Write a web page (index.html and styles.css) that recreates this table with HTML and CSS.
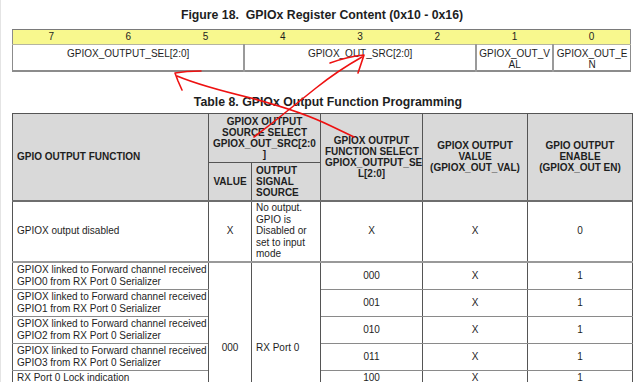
FILE: index.html
```html
<!DOCTYPE html>
<html>
<head>
<meta charset="utf-8">
<link rel="stylesheet" href="styles.css">
</head>
<body>
<div class="page">
  <h2 class="fig-title">Figure 18.&nbsp; GPIOx Register Content (0x10 - 0x16)</h2>
  <table class="reg">
    <colgroup>
      <col class="rc"><col class="rc"><col class="rc"><col class="rc"><col class="rc"><col class="rc"><col class="rc"><col class="rc">
    </colgroup>
    <tr class="bits">
      <td>7</td><td>6</td><td>5</td><td>4</td><td>3</td><td>2</td><td>1</td><td>0</td>
    </tr>
    <tr class="fields">
      <td colspan="3">GPIOX_OUTPUT_SEL[2:0]</td>
      <td colspan="3">GPIOX_OUT_SRC[2:0]</td>
      <td>GPIOX_OUT_V<br>AL</td>
      <td>GPIOX_OUT_E<br>N</td>
    </tr>
  </table>

  <h2 class="tbl-title">Table 8. GPIOx Output Function Programming</h2>

  <table class="func">
    <colgroup>
      <col class="c1"><col class="c2"><col class="c3"><col class="c4"><col class="c5"><col class="c6">
    </colgroup>
    <thead>
      <tr class="h1">
        <th rowspan="2" class="left">GPIO OUTPUT FUNCTION</th>
        <th colspan="2">GPIOX OUTPUT<br>SOURCE SELECT<br>GPIOX_OUT_SRC[2:0<br>]</th>
        <th rowspan="2">GPIOX OUTPUT<br>FUNCTION SELECT<br>GPIOX_OUTPUT_SE<br>L[2:0]</th>
        <th rowspan="2">GPIOX OUTPUT<br>VALUE<br>(GPIOX_OUT_VAL)</th>
        <th rowspan="2">GPIO OUTPUT<br>ENABLE<br>(GPIOX_OUT EN)</th>
      </tr>
      <tr class="h2">
        <th>VALUE</th>
        <th class="left">OUTPUT<br>SIGNAL<br>SOURCE</th>
      </tr>
    </thead>
    <tbody>
      <tr class="r-dis">
        <td class="left">GPIOX output disabled</td>
        <td>X</td>
        <td class="left">No output.<br>GPIO is<br>Disabled or<br>set to input<br>mode</td>
        <td>X</td>
        <td>X</td>
        <td>0</td>
      </tr>
      <tr class="r2">
        <td class="left">GPIOX linked to Forward channel received<br>GPIO0 from RX Port 0 Serializer</td>
        <td rowspan="8">000</td>
        <td rowspan="8" class="left">RX Port 0</td>
        <td>000</td><td>X</td><td>1</td>
      </tr>
      <tr class="r2">
        <td class="left">GPIOX linked to Forward channel received<br>GPIO1 from RX Port 0 Serializer</td>
        <td>001</td><td>X</td><td>1</td>
      </tr>
      <tr class="r2">
        <td class="left">GPIOX linked to Forward channel received<br>GPIO2 from RX Port 0 Serializer</td>
        <td>010</td><td>X</td><td>1</td>
      </tr>
      <tr class="r2">
        <td class="left">GPIOX linked to Forward channel received<br>GPIO3 from RX Port 0 Serializer</td>
        <td>011</td><td>X</td><td>1</td>
      </tr>
      <tr class="r1">
        <td class="left">RX Port 0 Lock indication</td>
        <td>100</td><td>X</td><td>1</td>
      </tr>
      <tr class="r1">
        <td class="left">RX Port 0 Pass indication</td>
        <td>101</td><td>X</td><td>1</td>
      </tr>
      <tr class="r1">
        <td class="left">RX Port 0 Frame Valid indication</td>
        <td>110</td><td>X</td><td>1</td>
      </tr>
      <tr class="r1">
        <td class="left">RX Port 0 Line Valid indication</td>
        <td>111</td><td>X</td><td>1</td>
      </tr>
    </tbody>
  </table>

  <svg class="marks" width="640" height="382" viewBox="0 0 640 382" fill="none" stroke="#ee1111" stroke-width="1.6" stroke-linecap="round" stroke-linejoin="round">
    <path d="M200 71 L186 71.5 L174 73 L177 81 L181 90"/>
    <path d="M176 76 C200 86 225 92 250 98 C280 106 310 116 330 126 L353 137"/>
    <path d="M329 63 C340 59 352 56 363 55 L360 64 L357 73"/>
    <path d="M361 57 C345 66 330 76 315 88 C300 100 285 112 270 124 L253 137"/>
  </svg>
</div>
</body>
</html>
```

FILE: styles.css
```css
html, body {
  margin: 0;
  padding: 0;
  background: #ffffff;
}

body {
  font-family: "Liberation Sans", Arial, sans-serif;
  color: #1e1e1e;
}

.page {
  position: relative;
  width: 640px;
  padding: 0 9px 0 12px;
  box-sizing: border-box;
  border-left: 1px solid #e4e4e4;
}

.fig-title {
  margin: 0;
  padding-top: 7px;
  height: 29px;
  box-sizing: border-box;
  line-height: 16px;
  font-size: 12.3px;
  font-weight: bold;
  text-align: center;
}

.reg {
  width: 619px;
  margin-left: -1px;
  border-collapse: collapse;
  table-layout: fixed;
  font-size: 10px;
  border-top: 1px solid #7a7a7a;
  border-bottom: 2px solid #8c8c8c;
  border-left: 1px solid #8c8c8c;
  border-right: 1px solid #8c8c8c;
}

.reg td {
  padding: 0;
  text-align: center;
  vertical-align: top;
  line-height: 11px;
}

.reg .bits td {
  background: #f8f88e;
  height: 14px;
  line-height: 14px;
  border-bottom: 1px solid #b5b5a0;
}

.reg .fields td {
  height: 25px;
  padding-top: 3px;
  box-sizing: border-box;
  border-left: 2px solid #9a9a9a;
}

.reg .fields td:first-child {
  border-left: 1px solid #8c8c8c;
}

.tbl-title {
  margin: 0;
  padding-top: 22px;
  padding-left: 12px;
  height: 41px;
  box-sizing: border-box;
  line-height: 16px;
  font-size: 12.3px;
  font-weight: bold;
  text-align: center;
}

.func {
  width: 620px;
  margin-left: -1px;
  border-collapse: collapse;
  table-layout: fixed;
  font-size: 10px;
  line-height: 11.5px;
}

.c1 { width: 196px; }
.c2 { width: 43px; }
.c3 { width: 69px; }
.c4 { width: 102px; }
.c5 { width: 105px; }
.c6 { width: 105px; }

.func th,
.func td {
  border: 1px solid #555555;
  padding: 0 4px;
  text-align: center;
  vertical-align: middle;
  white-space: nowrap;
}

.func th {
  background: #d9d9d9;
  font-weight: bold;
  line-height: 11px;
}

.func .left {
  text-align: left;
}

.func .h1 { height: 49px; }
.func .h2 { height: 38px; }

.func thead tr.h2 th,
.func thead tr.h1 th[rowspan] {
  border-bottom: 2px solid #6e6e6e;
}

.func .r-dis td {
  height: 59px;
  border-bottom: 2px solid #999999;
}

.func .r2 td { height: 26px; }
.func .r1 td { height: 15px; }

.func tbody td {
  border-top-color: #8a8a8a;
  border-bottom-color: #8a8a8a;
}

.marks {
  position: absolute;
  left: 0;
  top: 0;
  pointer-events: none;
}
```
